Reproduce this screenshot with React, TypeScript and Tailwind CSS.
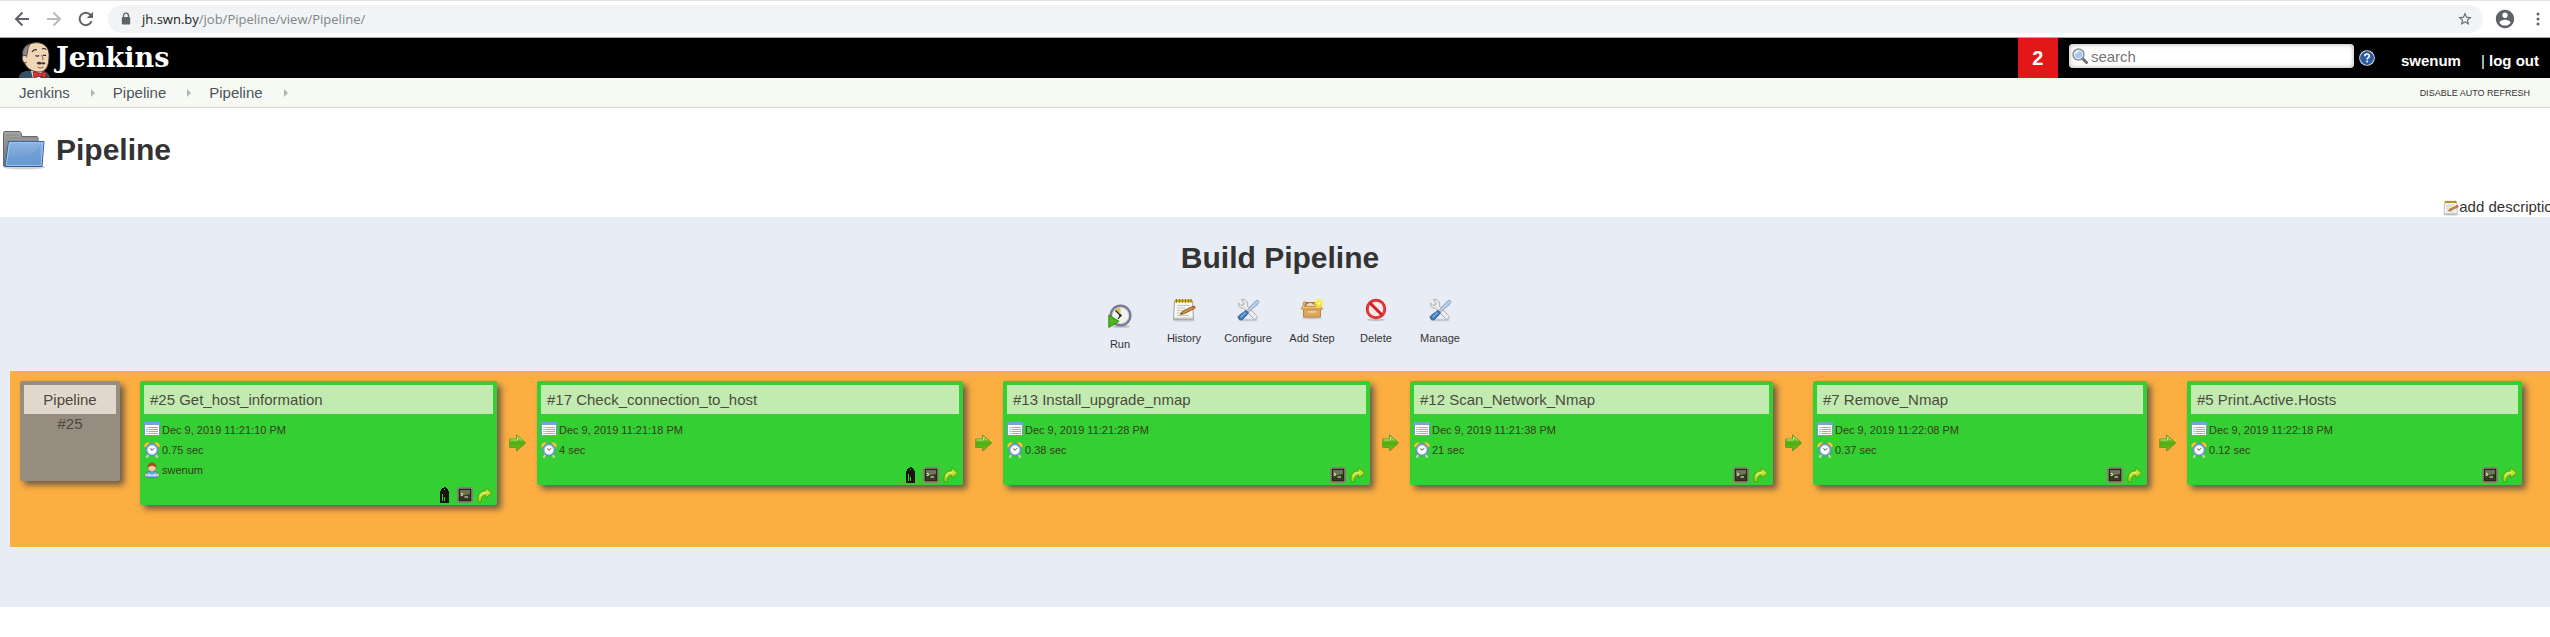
import type { ReactNode } from "react";

type Stage = {
  title: string;
  date: string;
  duration: string;
  user?: string;
  parameters?: boolean;
  size: string;
};

const stages: Stage[] = [
  { title: "#25 Get_host_information", date: "Dec 9, 2019 11:21:10 PM", duration: "0.75 sec", user: "swenum", parameters: true, size: "grow-[349]" },
  { title: "#17 Check_connection_to_host", date: "Dec 9, 2019 11:21:18 PM", duration: "4 sec", parameters: true, size: "grow-[418]" },
  { title: "#13 Install_upgrade_nmap", date: "Dec 9, 2019 11:21:28 PM", duration: "0.38 sec", size: "grow-[359]" },
  { title: "#12 Scan_Network_Nmap", date: "Dec 9, 2019 11:21:38 PM", duration: "21 sec", size: "grow-[355]" },
  { title: "#7 Remove_Nmap", date: "Dec 9, 2019 11:22:08 PM", duration: "0.37 sec", size: "grow-[326]" },
  { title: "#5 Print.Active.Hosts", date: "Dec 9, 2019 11:22:18 PM", duration: "0.12 sec", size: "grow-[327]" },
];

/* ---------- icons ---------- */

const BackIcon = () => (
  <svg width="16" height="16" viewBox="0 0 16 16" fill="none" stroke="#5f6368" strokeWidth="2">
    <path d="M15 8H2.5M8.5 1.5 2 8l6.5 6.5" />
  </svg>
);

const ForwardIcon = () => (
  <svg width="16" height="16" viewBox="0 0 16 16" fill="none" stroke="#b9bbbe" strokeWidth="2">
    <path d="M1 8h12.500M7.500 1.500 14 8l-6.500 6.500" />
  </svg>
);

const ReloadIcon = () => (
  <svg width="16" height="16" viewBox="0 0 16 16" fill="none">
    <path d="M13.600 10.200A6.200 6.200 0 1 1 12.600 4" stroke="#5f6368" strokeWidth="2" />
    <path d="M15 .8V7H8.800z" fill="#5f6368" />
  </svg>
);

const LockIcon = () => (
  <svg width="10" height="14" viewBox="0 0 10 14">
    <path d="M2.500 6V3.700a2.500 2.500 0 0 1 5 0V6" fill="none" stroke="#5f6368" strokeWidth="1.300" />
    <rect x="0.800" y="5" width="8.400" height="7.500" rx="1" fill="#5f6368" />
  </svg>
);

const StarIcon = () => (
  <svg width="16" height="16" viewBox="0 0 24 24" fill="#5f6368">
    <path d="M22 9.240l-7.190-.62L12 2 9.190 8.630 2 9.240l5.460 4.730L5.820 21 12 17.270 18.180 21l-1.630-7.030L22 9.240zM12 15.400l-3.760 2.270 1-4.280-3.320-2.880 4.380-.38L12 6.100l1.710 4.040 4.380.38-3.320 2.880 1 4.280L12 15.400z" />
  </svg>
);

const AccountIcon = () => (
  <svg width="22" height="22" viewBox="0 0 24 24" fill="#5f6368">
    <path d="M12 2C6.480 2 2 6.480 2 12s4.480 10 10 10 10-4.480 10-10S17.520 2 12 2zm0 3c1.660 0 3 1.340 3 3s-1.340 3-3 3-3-1.340-3-3 1.340-3 3-3zm0 14.200c-2.500 0-4.710-1.280-6-3.220.03-1.990 4-3.080 6-3.080 1.990 0 5.970 1.090 6 3.080-1.290 1.940-3.500 3.220-6 3.220z" />
  </svg>
);

const DotsIcon = () => (
  <svg width="4" height="14" viewBox="0 0 4 14" fill="#5f6368">
    <circle cx="2" cy="2" r="1.500" />
    <circle cx="2" cy="7" r="1.500" />
    <circle cx="2" cy="12" r="1.500" />
  </svg>
);

const ButlerLogo = () => (
  <svg width="34" height="36" viewBox="0 0 34 36">
    <path d="M1 36c0-4 2-6 7-7l14-1c6 1 9 3 10 8z" fill="#335061" />
    <path d="M13 29h12l-3 7h-7z" fill="#f4f4f4" />
    <path d="M5 17C3 9 6 2 15 1c10-2 17 4 16 14 0 9-3 15-10 15S7 26 5 17z" fill="#f0d6b7" stroke="#3a332c" strokeWidth="0.900" />
    <path d="M5.500 16C2.500 9 7 3 13 1.500 9.500 5 10 8 9.500 11c-1 1-.5 3-1 5z" fill="#8a8a8a" stroke="#2c2c2c" strokeWidth="0.700" />
    <path d="M8.500 14c-4-1.500-5 1-4 4s3 3.500 4.500 2" fill="#f0d6b7" stroke="#3a332c" strokeWidth="0.900" />
    <path d="M14 10c1.500-2.500 3-3 5-2M24 7c1.500-.8 3-.5 4 .7M17.500 13.500c1.300.9 2.500.9 3.600-.2M25 13c1.200.8 2 .8 3 0" fill="none" stroke="#2a2420" strokeWidth="1.100" />
    <path d="M23.500 13c1 2.500 2.500 4 .5 5.500" fill="none" stroke="#6b5540" strokeWidth="0.900" />
    <path d="M18.500 21c2-1.500 3.500-1.500 5-.3 1.500-1 3.500-.6 4 .6-1.500 1.800-3 1.200-4 .4-1.500 1.300-3.500 1.200-5-.7z" fill="#3f342a" />
    <path d="M19.500 25c2 1.300 4 1.300 6 0" fill="none" stroke="#8a4a3c" strokeWidth="0.900" />
    <path d="M15 30c2-1 5 .5 7 2 2-1.500 4-2.500 6-1.500V36l-6-2-6 2z" fill="#d33833" stroke="#7a1513" strokeWidth="0.700" />
    <circle cx="22" cy="33" r="1.800" fill="#ef3d3a" stroke="#7a1513" strokeWidth="0.600" />
  </svg>
);

const SearchIcon = () => (
  <svg width="16" height="16" viewBox="0 0 16 16">
    <path d="m10.500 10.500 4 4" stroke="#6f6f6f" strokeWidth="3" strokeLinecap="round" />
    <circle cx="6.500" cy="6.500" r="5.500" fill="#a9cdf2" stroke="#8b8b8b" strokeWidth="1.400" />
    <circle cx="6.500" cy="6.500" r="4.200" fill="#a5c8ee" stroke="#e8f1fb" />
    <path d="M3.500 6a3 3 0 0 1 3-2.500" stroke="#e9f4ff" strokeWidth="1.300" fill="none" />
  </svg>
);

const HelpIcon = () => (
  <svg width="16" height="16" viewBox="0 0 16 16">
    <circle cx="8" cy="8" r="7.800" fill="#dfe8f5" />
    <circle cx="8" cy="8" r="6.400" fill="#2e5da6" stroke="#1c3f7c" strokeWidth="0.800" />
    <path d="M5.800 6.300c0-3 4.500-3 4.500-.3 0 1.700-2.200 1.600-2.200 3.500" fill="none" stroke="#fff" strokeWidth="1.600" />
    <circle cx="8.100" cy="11.600" r="1" fill="#fff" />
  </svg>
);

const FolderIcon = () => (
  <svg width="44" height="40" viewBox="0 0 44 40">
    <defs>
      <linearGradient id="folder-back" x1="0" y1="0" x2="0" y2="1">
        <stop offset="0" stopColor="#a5a5a5" />
        <stop offset="1" stopColor="#6f6f6f" />
      </linearGradient>
      <linearGradient id="folder-front" x1="0" y1="0" x2="0" y2="1">
        <stop offset="0" stopColor="#8fb5e2" />
        <stop offset="1" stopColor="#5d91cb" />
      </linearGradient>
    </defs>
    <ellipse cx="22" cy="37" rx="21" ry="2.500" fill="#000" opacity="0.180" />
    <path d="M1.500 36V3c0-1 .5-1.500 1.500-1.500h14c1 0 1.500.5 2 1.500l1 3.500h14c1.500 0 2 .5 2 1.500v28z" fill="url(#folder-back)" stroke="#666" />
    <path d="M4 5h13M4 8h30M4 11h30" stroke="#858585" strokeWidth="0.800" />
    <path d="M6.500 11.500h35.500l-2 25H3z" fill="url(#folder-front)" stroke="#3465a4" />
    <path d="M7.600 12.600h33.200l-1.800 22.700H4.300z" fill="none" stroke="#a9c8ec" strokeWidth="0.900" />
    <path d="M6 29c10-1 25-3 32-13l-1.500 19H5z" fill="#6b9cd3" opacity="0.700" />
  </svg>
);

const NoteIcon = ({ className }: { className?: string }) => (
  <svg className={className} viewBox="0 0 24 24">
    <ellipse cx="12" cy="22.300" rx="11.500" ry="1.300" fill="#000" opacity="0.150" />
    <path d="M2.500 3h18l1 18.500h-20z" fill="#f6f6f3" stroke="#9a9a95" strokeWidth="0.900" />
    <path d="M2 19.500h19.200v1.700H1.800z" fill="#c9c9c4" />
    <path d="M3 1.500h17v2.800H3z" fill="#c9a820" />
    <path d="M4.500 1v3.600M7.500 1v3.600M10.500 1v3.600M13.500 1v3.600M16.500 1v3.600M19 1v3.600" stroke="#8a7000" strokeWidth="0.900" />
    <path d="M5 7.500h12M5 10h8M5 12.500h5M5 15h4M5 17.500h12" stroke="#bdbdb8" strokeWidth="0.900" />
    <path d="m8.500 16.300 2.200-3.200L21 8.300l1.400 2.300-10.200 5.100z" fill="#d0913c" stroke="#7d4f12" strokeWidth="0.800" />
    <path d="m20.500 8.500 2-.9 1.300 2.200-2 1z" fill="#e04a3a" />
    <path d="m8.500 16.300.9-1.400.9 1z" fill="#222" />
  </svg>
);

const RunIcon = () => (
  <svg width="24" height="24" viewBox="0 0 24 24">
    <ellipse cx="13" cy="22.500" rx="9" ry="1.300" fill="#000" opacity="0.200" />
    <circle cx="12.500" cy="11.500" r="9.800" fill="#f1f1ee" stroke="#7a7896" strokeWidth="2.400" />
    <circle cx="12.500" cy="11.500" r="8.300" fill="none" stroke="#c4c4cc" strokeWidth="0.800" />
    <path d="M12.500 11 6.500 5.500C8.500 3.800 10.500 3.500 12.500 3.600z" fill="#dcc06a" />
    <path d="m7.500 6.500 5 5-2.500 3.500" fill="none" stroke="#1c1c1c" strokeWidth="1.200" />
    <circle cx="12.500" cy="11.500" r="1.200" fill="#222" />
    <path d="M.8 11v12.500L11 17.300z" fill="#4cb81c" stroke="#2f7d0c" strokeWidth="0.900" />
  </svg>
);

const ToolsIcon = () => (
  <svg width="24" height="24" viewBox="0 0 24 24">
    <ellipse cx="12" cy="22" rx="10" ry="1.300" fill="#000" opacity="0.150" />
    <path d="M5.500 1.500 8 4.500l-.5 2.500L5 7.500 2.500 5C2 8 4 10.500 7.500 10L17.500 20.500c2 2 4.500-.5 3-2.800L11.500 8C12.500 4 9.500.5 5.500 1.500z" fill="#ececec" stroke="#a5a5a5" strokeWidth="0.900" />
    <path d="m21.300 2 1.700 1.500-2 3.500-8.500 7-1.500-1.500L18 4.500z" fill="#b9cfe6" stroke="#7f9cbd" strokeWidth="0.900" />
    <path d="m10 12.500 2.500 2.500L6.500 21.500C4.500 23 1 20.500 2.500 18z" fill="#4278bd" stroke="#2b5796" strokeWidth="0.900" />
    <path d="m9.500 14.500-5 5" stroke="#8bb3e3" strokeWidth="1.200" />
  </svg>
);

const BoxIcon = () => (
  <svg width="24" height="24" viewBox="0 0 24 24">
    <ellipse cx="12" cy="20" rx="10" ry="1.300" fill="#000" opacity="0.150" />
    <path d="M3.500 9h17v10h-17z" fill="#dea65a" stroke="#b57c34" strokeWidth="0.900" />
    <path d="M4 4h16l1.500 5H3z" fill="#a8763a" />
    <path d="M6 8c1-3 5-4 7-2s3 1 4 2z" fill="#efe0c4" />
    <path d="M3.500 4H6L4.500 8.300H20.500l2.500 2.700H1l2.200-3.500z" fill="#efc07c" stroke="#b8833e" strokeWidth="0.800" />
    <path d="M8 14h8" stroke="#f4d7a6" strokeWidth="1.500" />
    <circle cx="18.800" cy="5.300" r="4.300" fill="#fce94f" opacity="0.750" />
    <path d="m18.800 1.300 1.200 2.800 2.800 1.200L20 6.500l-1.200 2.800-1.200-2.800-2.800-1.200 2.800-1.200z" fill="#fff200" />
    <circle cx="18.800" cy="5.300" r="1.200" fill="#fffbd0" />
  </svg>
);

const DeleteIcon = () => (
  <svg width="24" height="24" viewBox="0 0 24 24">
    <ellipse cx="12" cy="21.800" rx="9" ry="1.300" fill="#000" opacity="0.180" />
    <circle cx="12" cy="11" r="8.500" fill="#f1dede" stroke="#c02020" strokeWidth="3.400" />
    <circle cx="12" cy="11" r="8.500" fill="#f6eaea" stroke="#e23a3a" strokeWidth="2.400" />
    <path d="m6 5 12 12" stroke="#d81f1f" strokeWidth="3" />
  </svg>
);

const CalendarIcon = () => (
  <svg width="16" height="14" viewBox="0 0 16 14">
    <path d="M.5.500h15v13H.5z" fill="#fbfcfe" stroke="#7c93c8" />
    <path d="M0 0h16v3H0z" fill="#7f9fd8" />
    <path d="M2.500 5.500h1M2.500 7.500h1M2.500 9.500h1M2.500 11.500h1" stroke="#4a8fe0" />
    <path d="M4.500 5.500h9.500M4.500 7.500h9.500M4.500 9.500h9.500M4.500 11.500h9.500" stroke="#b7a698" />
  </svg>
);

const ClockIcon = () => (
  <svg width="16" height="16" viewBox="0 0 16 16">
    <path d="M4.500 12.500 3 15M11.500 12.500 13 15" stroke="#d6d0c8" strokeWidth="2" strokeLinecap="round" />
    <path d="M.3 5C0 1.500 2.500 0 6 .3L1.500 5.500zM15.700 5C16 1.500 13.500 0 10 .3l4.500 5.200z" fill="#f6cf3c" stroke="#d0a01c" strokeWidth="0.600" />
    <circle cx="8" cy="7.800" r="6.200" fill="#7ba6da" stroke="#5a83b8" strokeWidth="0.700" />
    <circle cx="8" cy="7.800" r="4.400" fill="#fcfcfc" stroke="#d5e1f0" strokeWidth="0.600" />
    <path d="M6.500 6.300 8 8.300l2.200-2.200" fill="none" stroke="#555" strokeWidth="1" />
  </svg>
);

const UserIcon = () => (
  <svg width="16" height="16" viewBox="0 0 16 16">
    <path d="M1 14.500C1 10.500 4 9 8 9s7 1.500 7 5.500c-3 1.500-11 1.500-14 0z" fill="#62a0e4" stroke="#3a6ea8" strokeWidth="0.700" />
    <path d="M4.500 10.500C5.500 13 10.500 13 11.500 10.500l1 4h-9z" fill="#b4d8fa" />
    <circle cx="2.500" cy="13" r="1.500" fill="#f3c69c" />
    <circle cx="13.500" cy="13" r="1.500" fill="#f3c69c" />
    <circle cx="8" cy="5.500" r="4" fill="#f6cda6" stroke="#a86a38" strokeWidth="0.500" />
    <path d="M3.700 6C3.500 2 5.500.5 8 .5s4.500 1.500 4.300 5.500C11 4.500 9.500 4 8 4S5 4.500 3.700 6z" fill="#a3501c" />
  </svg>
);

const TagIcon = () => (
  <svg width="16" height="16" viewBox="0 0 16 16">
    <path d="M7 0h2v1h1v1h1v2h1v12H3V4h1V2h1V1h2z" fill="#15130a" />
    <path d="M7 2h1v1H7zM5 7h1v7H5zM7 10h1v4H7z" fill="#33cf33" />
  </svg>
);

const TerminalIcon = () => (
  <svg width="16" height="16" viewBox="0 0 16 16">
    <rect x="0.500" y="0.500" width="15" height="15" rx="1.500" fill="#cfc8b8" stroke="#857f72" />
    <rect x="2" y="2" width="12" height="12" fill="#343a20" stroke="#15180c" />
    <path d="M3 3h10v4L3 9z" fill="#6c7550" />
    <path d="m4 6 2 1.500L4 9M7.500 10H11" fill="none" stroke="#f4f4e8" />
  </svg>
);

const RedoIcon = () => (
  <svg width="16" height="16" viewBox="0 0 16 16">
    <defs>
      <linearGradient id="redo" x1="0" y1="0" x2="0" y2="1">
        <stop offset="0" stopColor="#d4ee3c" />
        <stop offset="1" stopColor="#8fd01c" />
      </linearGradient>
    </defs>
    <path d="M8.800.8 14.600 6l-5.800 5V8.300C6 8.200 4.300 10 4.300 14.700L1.500 15.200C-.5 9 2.500 4 8.800 3.700z" fill="url(#redo)" stroke="#5a960c" strokeWidth="0.900" />
    <path d="M3 9.500C4 6.500 6 5.500 9.500 5.300" fill="none" stroke="#e8f7a0" strokeWidth="0.900" />
  </svg>
);

const ArrowIcon = () => (
  <svg width="18" height="18" viewBox="0 0 18 18">
    <defs>
      <linearGradient id="step-arrow" x1="0" y1="0" x2="0" y2="1">
        <stop offset="0" stopColor="#8fce4a" />
        <stop offset="0.550" stopColor="#4fae10" />
        <stop offset="1" stopColor="#6fc422" />
      </linearGradient>
    </defs>
    <path d="M1 6h7V1.500L17 9.500l-9 8V13H1z" fill="#a05f10" opacity="0.350" />
    <path d="M.7 5h6.800V.8L16.500 8.800l-9 8V13.500H.7z" fill="url(#step-arrow)" stroke="#5c9a24" strokeWidth="0.900" />
    <path d="M1.500 6h7V3l4 3.500" fill="none" stroke="#c4eb90" strokeWidth="0.900" />
  </svg>
);

/* ---------- building blocks ---------- */

const BrowserBar = () => (
  <div className="flex h-[38px] items-center border-t border-b border-t-[#dee1e6] border-b-[#a8a8a8] bg-white pl-[14px] pr-[10px]">
    <div className="flex gap-4">
      <button aria-label="Back"><BackIcon /></button>
      <button aria-label="Forward"><ForwardIcon /></button>
      <button aria-label="Reload"><ReloadIcon /></button>
    </div>
    <div className="ml-[14px] flex h-7 flex-1 items-center rounded-full bg-[#f1f3f4] pl-[13px] pr-[10px] font-['Open_Sans',sans-serif] text-[13px]">
      <LockIcon />
      <div className="ml-[11px] flex-1 text-[#80868b]">
        <span className="text-[#202124]">jh.swn.by</span>/job/Pipeline/view/Pipeline/
      </div>
      <button aria-label="Bookmark"><StarIcon /></button>
    </div>
    <div className="ml-[11px] flex items-center gap-5">
      <button aria-label="Account"><AccountIcon /></button>
      <button aria-label="Menu"><DotsIcon /></button>
    </div>
  </div>
);

const Header = () => (
  <header className="flex h-10 bg-black pl-[18px] pr-[11px] font-bold text-white">
    <a href="#home" className="flex items-end gap-1">
      <ButlerLogo />
      <span className="self-start pt-1 font-['DejaVu_Serif',serif] text-[27px] leading-8">Jenkins</span>
    </a>
    <div className="ml-auto flex">
      <a href="#alerts" className="flex w-10 items-center justify-center bg-[#e21818] text-xl">2</a>
      <div className="ml-[11px] mt-[6px] flex h-6 w-[285px] items-center rounded-[4px] bg-white pl-[3px] shadow-[inset_0_0_5px_#aaa]">
        <SearchIcon />
        <input aria-label="Search" placeholder="search" className="ml-[3px] min-w-0 flex-1 bg-transparent pt-[2px] font-normal text-black outline-none placeholder:text-[#757575]" />
      </div>
      <a href="#help" aria-label="Help" className="ml-[5px] mt-3"><HelpIcon /></a>
      <a href="#user" className="ml-[26px] mt-[14px] leading-[18px]">swenum</a>
      <a href="#logout" className="ml-5 mt-[14px] leading-[18px]">
        <span className="font-normal">|</span> log out
      </a>
    </div>
  </header>
);

const Breadcrumbs = () => (
  <nav className="flex h-[30px] items-center border-b border-[#d3d7cf] bg-[#f6faf2] pl-[19px] pr-5 text-[#4d545d]">
    {["Jenkins", "Pipeline", "Pipeline"].map((name, i) => (
      <div key={i} className="flex items-center">
        <a href="#crumb">{name}</a>
        <svg width="4" height="8" viewBox="0 0 4 8" className="mr-[18px] ml-[21px]"><path d="M0 0l4 4-4 4z" fill="#b3b3b3" /></svg>
      </div>
    ))}
    <a href="#refresh" className="ml-auto text-[9px] uppercase text-[#333]">Disable auto refresh</a>
  </nav>
);

const ToolbarItem = ({ label, lower, children }: { label: string; lower?: boolean; children: ReactNode }) => (
  <a href="#action" className={lower ? "flex w-16 flex-col items-center gap-[9px] pt-[6px]" : "flex w-16 flex-col items-center gap-[9px]"}>
    {children}
    <span className="text-[11px] leading-[14px]">{label}</span>
  </a>
);

const StageCard = ({ stage }: { stage: Stage }) => (
  <article className={`basis-0 rounded-[2px] bg-[#33cf33] px-1 pt-1 pb-[2px] shadow-[4px_4px_6px_#6b5a45] ${stage.size}`}>
    <h2 className="truncate bg-[#c2ebb2] px-[6px] leading-[29px] text-[#4e4b3c]">{stage.title}</h2>
    <ul className="mt-2 text-[11px] leading-4 text-[#3a3a1c]">
      <li className="flex h-5 gap-[2px]"><CalendarIcon />{stage.date}</li>
      <li className="flex h-5 gap-[2px]"><ClockIcon />{stage.duration}</li>
      {stage.user && <li className="flex h-5 gap-[2px]"><UserIcon />{stage.user}</li>}
    </ul>
    <div className="mt-[5px] flex justify-end gap-1">
      {stage.parameters && <a href="#parameters" aria-label="Parameters"><TagIcon /></a>}
      <a href="#console" aria-label="Console"><TerminalIcon /></a>
      <a href="#rerun" aria-label="Re-run"><RedoIcon /></a>
    </div>
  </article>
);

export default function App() {
  return (
    <div className="overflow-hidden bg-white font-['Liberation_Sans',Arial,sans-serif] text-[15px] leading-5 text-[#333] [&_svg]:block [&_svg]:shrink-0">
      <BrowserBar />
      <Header />
      <Breadcrumbs />
      <main>
        <h1 className="mt-[22px] flex items-center gap-[10px] pl-[2px] text-[30px] leading-10 font-bold">
          <FolderIcon />
          Pipeline
        </h1>
        <div className="mt-[27px] flex h-5 justify-end">
          <a href="#description" className="-mr-[11px] flex items-center whitespace-nowrap">
            <NoteIcon className="mt-[2px] h-4 w-4" />
            add description
          </a>
        </div>
        <section className="bg-[#e8ecf4] pb-[60px] pl-[10px]">
          <h1 className="pt-[21px] text-center text-[30px] leading-10 font-bold">Build Pipeline</h1>
          <div className="mt-5 flex justify-center">
            <ToolbarItem label="Run" lower><RunIcon /></ToolbarItem>
            <ToolbarItem label="History"><NoteIcon className="h-6 w-6" /></ToolbarItem>
            <ToolbarItem label="Configure"><ToolsIcon /></ToolbarItem>
            <ToolbarItem label="Add Step"><BoxIcon /></ToolbarItem>
            <ToolbarItem label="Delete"><DeleteIcon /></ToolbarItem>
            <ToolbarItem label="Manage"><ToolsIcon /></ToolbarItem>
          </div>
          <div className="mt-5 flex items-start bg-[#fcae41] pt-[10px] pr-7 pb-[42px] pl-[10px]">
            <article className="mr-5 h-[100px] w-[100px] shrink-0 rounded-[2px] bg-[#978c80] p-1 text-center text-[#4e463c] shadow-[4px_4px_6px_#6b5a45]">
              <h2 className="bg-[#e0d8cc] leading-[29px]">Pipeline</h2>
              <p>#25</p>
            </article>
            {stages.flatMap((stage, i) => [
              i > 0 && <div key={`arrow-${i}`} className="mt-[53px] w-10 shrink-0 pl-3"><ArrowIcon /></div>,
              <StageCard key={stage.title} stage={stage} />,
            ])}
          </div>
        </section>
      </main>
    </div>
  );
}
